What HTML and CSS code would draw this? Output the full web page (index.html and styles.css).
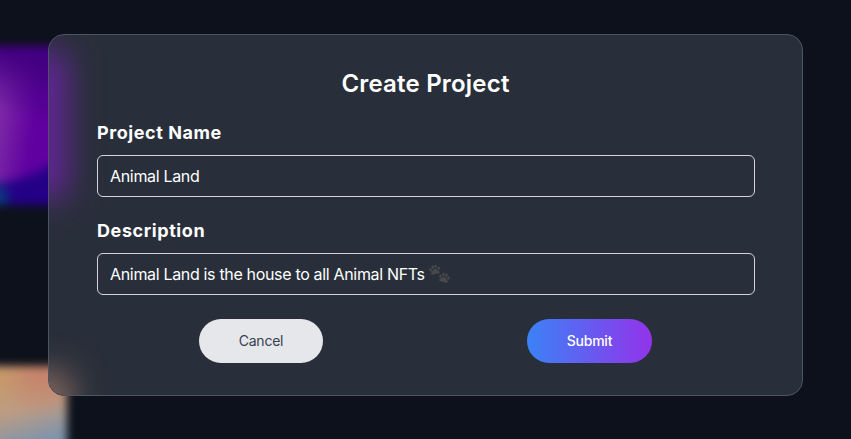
FILE: index.html
```html
<!DOCTYPE html>
<html lang="en">
<head>
<meta charset="utf-8">
<title>Create Project</title>
<link rel="stylesheet" href="styles.css">
</head>
<body>
<div class="backdrop">
  <div class="art art-top"></div>
  <div class="art art-bottom"></div>
</div>
<main class="modal">
  <h1 class="title">Create Project</h1>
  <h2 class="label">Project Name</h2>
  <div class="field">Animal Land</div>
  <h2 class="label">Description</h2>
  <div class="field"><span class="desc">Animal Land is the house to all Animal NFTs</span>
    <svg class="paws" viewBox="0 0 22 20" aria-hidden="true">
      <defs>
        <g id="paw">
          <path d="M0-1C2-1 2.6.6 3.8 1.6C5.4 3 4.3 5 2.5 4.5C1 4-1 4-2.5 4.5C-4.3 5-5.4 3-3.8 1.6C-2.6.6-2-1 0-1Z"/>
          <ellipse cx="-4.4" cy="-1" rx="1.3" ry="1.8" transform="rotate(-20 -4.4 -1)"/>
          <ellipse cx="-1.6" cy="-3.5" rx="1.3" ry="1.9"/>
          <ellipse cx="1.6" cy="-3.5" rx="1.3" ry="1.9"/>
          <ellipse cx="4.4" cy="-1" rx="1.3" ry="1.8" transform="rotate(20 4.4 -1)"/>
        </g>
      </defs>
      <use href="#paw" transform="translate(5.8 6) rotate(-12) scale(.94)"/>
      <use href="#paw" transform="translate(15.2 14) rotate(14) scale(.94)"/>
    </svg>
  </div>
  <div class="actions">
    <button class="btn cancel">Cancel</button>
    <button class="btn submit">Submit</button>
  </div>
</main>
</body>
</html>
```
FILE: styles.css
```css
* { box-sizing: border-box; }
body {
  margin: 0;
  height: 439px;
  padding: 34px 48px 0;
  overflow: hidden;
  background: #0d111c;
  font-family: Inter, "Liberation Sans", sans-serif;
  color: #fff;
}
/* Blurred artwork that shows behind the dialog */
.backdrop { position: absolute; inset: 0; overflow: hidden; }
.art { position: absolute; filter: blur(4px); }
.art-top {
  left: -30px; top: 46px; width: 97px; height: 159px;
  background:
    radial-gradient(ellipse 18px 20px at 26px 152px, #005078, transparent),
    radial-gradient(ellipse 135px 138px at 12px 0, transparent 97%, #240087 103%),
    linear-gradient(200deg, #430082 15%, transparent 45%),
    linear-gradient(98deg, #7d2aa6 32%, #6000a0 62%);
}
.art-bottom {
  left: -30px; top: 366px; width: 97px; height: 110px;
  background:
    radial-gradient(ellipse 45px 42px at 72px 8px, #c5806d, transparent),
    linear-gradient(165deg, #c69b6b 18%, #bd9c83 42%, #7c94ad 70%, #7289ae);
}
.modal {
  position: relative;
  isolation: isolate;
  width: 755px;
  height: 362px;
  padding: 33px 47px 32px 48px;
  overflow: hidden;
  border: 1px solid #4b5563;
  border-radius: 16px;
  background: #292f3a;
}
/* Glow of the artwork through the frosted panel */
.modal::before,
.modal::after {
  content: "";
  position: absolute;
  z-index: -1;
  left: -40px;
  width: 58px;
  filter: blur(16px);
}
.modal::before { top: 17px; height: 146px; background: #642599; }
.modal::after { top: 337px; height: 70px; width: 62px; background: #856860; }
.title { margin: 0 0 19px; font-size: 24px; line-height: 32px; font-weight: 640; letter-spacing: .2px; text-align: center; text-indent: -1px; }
.label { margin: 0 0 8px; font-size: 18px; line-height: 28px; font-weight: 650; letter-spacing: .58px; }
.field {
  display: flex;
  align-items: center;
  height: 42px;
  margin-bottom: 20px;
  padding: 0 12px;
  border: 1px solid #d1d5db;
  border-radius: 6px;
  font-size: 16px;
  letter-spacing: -.33px;
}
.paws { width: 22px; height: 20px; margin-left: 4px; fill: #484949; }
.actions { display: flex; justify-content: space-around; padding: 4px 1px 0 0; }
.btn {
  width: 124px;
  height: 44px;
  padding: 0;
  border: 0;
  border-radius: 22px;
  font: 400 14px/20px Inter, sans-serif;
  letter-spacing: -.25px;
}
.cancel { background: #e5e7eb; color: #374151; }
.submit { width: 125px; background: linear-gradient(90deg, #3b82f6, #9333ea); color: #fff; font-weight: 500; }
```
